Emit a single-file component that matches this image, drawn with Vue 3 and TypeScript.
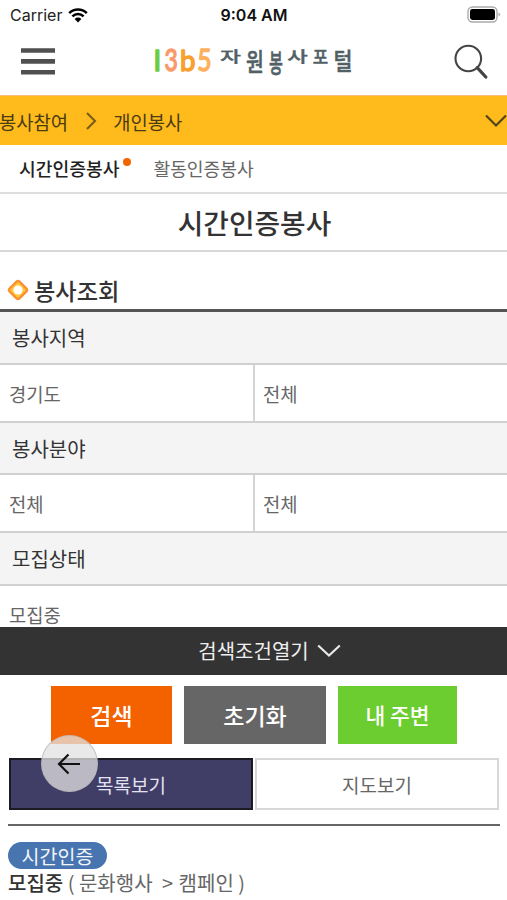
<script setup lang="ts">
interface FilterGroup {
  label: string
  values: string[]
}

interface LogoGlyph {
  char: string
  x: number
  y: number
  sx: number
  sy: number
  color: string
}

const filters: FilterGroup[] = [
  { label: '봉사지역', values: ['경기도', '전체'] },
  { label: '봉사분야', values: ['전체', '전체'] },
  { label: '모집상태', values: ['모집중'] },
]

const digits: LogoGlyph[] = [
  { char: 'l', x: 157.3, y: 71, sx: 1, sy: 0.98, color: '#6bcd3f' },
  { char: '3', x: 171, y: 71, sx: 0.76, sy: 1, color: '#f99a6b' },
  { char: 'b', x: 187.8, y: 71, sx: 0.92, sy: 0.98, color: '#f9a02c' },
  { char: '5', x: 204.5, y: 71, sx: 0.82, sy: 1, color: '#fdb05e' },
]

const hangul: LogoGlyph[] = [
  { char: '자', x: 230.5, y: 56.5, sx: 1.08, sy: 0.72, color: '#515f66' },
  { char: '원', x: 255, y: 61.5, sx: 0.92, sy: 1.18, color: '#515f66' },
  { char: '봉', x: 276, y: 63, sx: 0.72, sy: 1.26, color: '#515f66' },
  { char: '사', x: 297.5, y: 56.5, sx: 1.06, sy: 0.7, color: '#515f66' },
  { char: '포', x: 320.5, y: 57, sx: 0.8, sy: 0.88, color: '#515f66' },
  { char: '털', x: 343, y: 61, sx: 0.98, sy: 1.12, color: '#515f66' },
]

const place = (g: LogoGlyph): string => `translate(${g.x} ${g.y}) scale(${g.sx} ${g.sy})`
</script>

<template>
  <div class="screen">
    <div class="status">
      <div class="carrier">
        <span>Carrier</span>
        <svg width="20" height="15" viewBox="0 0 20 15">
          <path d="M1.2 5.2A12.6 12.6 0 0 1 18.8 5.2M4.4 8.4A8 8 0 0 1 15.6 8.4" fill="none" stroke="#000" stroke-width="2.5" />
          <path d="M6.6 10.9A4.9 4.9 0 0 1 13.4 10.9L10 14.4Z" fill="#000" />
        </svg>
      </div>
      <div class="time">9:04 AM</div>
      <div class="battery">
        <svg width="34" height="18" viewBox="0 0 34 18">
          <rect x="1" y="1" width="29" height="15" rx="4.5" fill="#fff" stroke="#aaa" stroke-width="1.4" />
          <rect x="3" y="3" width="25" height="11" rx="2.4" fill="#000" />
          <path d="M31.5 6.5q1.6.5 1.6 2t-1.6 2z" fill="#aaa" />
        </svg>
      </div>
    </div>

    <header class="header">
      <svg class="menu" width="34" height="27" viewBox="0 0 34 27">
        <path d="M0 2.5H34M0 13.4H34M0 24.2H34" stroke="#505050" stroke-width="4.6" />
      </svg>
      <svg class="logo" width="210" height="44" viewBox="150 40 210 44">
        <text
          v-for="g in digits"
          :key="g.char"
          class="digit"
          :transform="place(g)"
          :fill="g.color"
          :stroke="g.color"
        >{{ g.char }}</text>
        <text
          v-for="g in hangul"
          :key="g.char"
          class="syllable"
          y="8.2"
          :transform="place(g)"
          :fill="g.color"
          :stroke="g.color"
        >{{ g.char }}</text>
      </svg>
      <svg class="search" width="34" height="35" viewBox="0 0 34 35">
        <circle cx="14.3" cy="14.5" r="12.8" fill="none" stroke="#444" stroke-width="2.1" />
        <path d="M23.2 23.7L31.8 33" stroke="#444" stroke-width="3.2" stroke-linecap="round" />
      </svg>
    </header>

    <nav class="crumbs">
      <span>봉사참여</span>
      <svg class="crumb-arrow" width="12" height="20" viewBox="0 0 12 20">
        <path d="M2 2L10 10L2 18" fill="none" stroke="#765a1c" stroke-width="2" />
      </svg>
      <span>개인봉사</span>
      <svg class="crumb-down" width="22" height="14" viewBox="0 0 22 14">
        <path d="M1 1.5L11 11.5L21 1.5" fill="none" stroke="#54441a" stroke-width="2.2" />
      </svg>
    </nav>

    <nav class="subtabs">
      <span class="active">시간인증봉사</span>
      <i class="dot"></i>
      <span>활동인증봉사</span>
    </nav>

    <h1 class="title">시간인증봉사</h1>

    <h2 class="section">
      <svg width="22" height="22" viewBox="0 0 22 22">
        <rect x="4" y="4" width="14" height="14" rx="2.4" fill="#ffc93c" stroke="#fb9130" stroke-width="2.4" transform="rotate(45 11 11)" />
        <circle cx="11" cy="11" r="4.6" fill="#fff" />
      </svg>
      <span>봉사조회</span>
    </h2>

    <section class="filters">
      <div v-for="f in filters" :key="f.label" class="filter">
        <div class="filter-label">{{ f.label }}</div>
        <div class="filter-row">
          <div v-for="(v, i) in f.values" :key="i" class="filter-value">{{ v }}</div>
        </div>
      </div>
    </section>

    <div class="expand">
      <span>검색조건열기</span>
      <svg width="24" height="14" viewBox="0 0 24 14">
        <path d="M1.2 1.5L12 11.6L22.8 1.5" fill="none" stroke="#e8e8e8" stroke-width="2.2" />
      </svg>
    </div>

    <div class="actions">
      <button class="btn find">검색</button>
      <button class="btn reset">초기화</button>
      <button class="btn near">내 주변</button>
    </div>

    <div class="views">
      <button class="view on">목록보기</button>
      <button class="view">지도보기</button>
    </div>

    <article class="result">
      <span class="badge">시간인증</span>
      <p class="summary"><b>모집중</b> <span class="category">( 문화행사 <span class="gt">&gt;</span> 캠페인 )</span></p>
    </article>

    <button class="back" aria-label="back">
      <svg width="24" height="22" viewBox="0 0 24 22">
        <path d="M23 11H2M11.5 1.5L2 11L11.5 20.5" fill="none" stroke="#111" stroke-width="2.2" />
      </svg>
    </button>
  </div>
</template>

<style>
body {
  margin: 0;
  background: #fff;
}
</style>

<style scoped>
.screen,
.screen * {
  box-sizing: border-box;
}
.screen {
  position: relative;
  width: 507px;
  height: 900px;
  overflow: hidden;
  background: #fff;
  color: #333;
  font-family: 'Noto Sans CJK KR', sans-serif;
}
button {
  margin: 0;
  padding: 0;
  border: 0;
  font-family: inherit;
}
svg {
  display: block;
  flex: none;
}
.status {
  display: grid;
  grid-template-columns: 1fr auto 1fr;
  align-items: center;
  height: 30px;
  padding: 0 6px 0 10px;
  font-family: Inter, sans-serif;
  font-size: 16px;
  line-height: 30px;
  color: #222;
}
.carrier {
  display: flex;
  align-items: center;
  gap: 6px;
}
.time {
  padding-right: 3px;
  font-weight: 600;
  font-size: 16px;
  color: #111;
}
.battery {
  display: flex;
  justify-content: flex-end;
  padding-bottom: 1px;
}
.header {
  display: flex;
  align-items: center;
  height: 66px;
  padding: 0 19px 0 21px;
  border-bottom: 1px solid #f6bd83;
}
.menu {
  margin-top: -3px;
}
.logo {
  margin: -2px auto 0 95px;
}
.digit {
  font-family: Lato, sans-serif;
  font-size: 30px;
  text-anchor: middle;
  stroke-width: 1.5px;
  stroke-linejoin: round;
}
.syllable {
  font-size: 21px;
  font-weight: 500;
  text-anchor: middle;
  stroke-width: 0.5px;
  stroke-linejoin: round;
}
.search {
  margin-top: -3px;
}
.crumbs {
  display: flex;
  align-items: center;
  height: 49px;
  background: #ffba1b;
  font-size: 18.8px;
  line-height: 49px;
  color: #4a3a16;
}
.crumbs > span {
  margin-left: -1px;
  padding-top: 1px;
}
.crumb-arrow {
  margin: 0 17px;
}
.crumb-down {
  margin-left: auto;
}
.subtabs {
  display: flex;
  height: 49px;
  padding-left: 19px;
  border-bottom: 2px solid #ddd;
  font-size: 18.2px;
  line-height: 46px;
  color: #666;
}
.subtabs .active {
  font-weight: 500;
  color: #222;
}
.dot {
  width: 8px;
  height: 8px;
  margin: 13px 22px 0 4px;
  border-radius: 50%;
  background: #f26500;
}
.title {
  height: 58px;
  margin: 0;
  padding-left: 2px;
  border-bottom: 2px solid #d8d8d8;
  font-size: 27.8px;
  font-weight: 500;
  line-height: 56px;
  text-align: center;
}
.section {
  display: flex;
  align-items: center;
  gap: 5px;
  height: 60px;
  margin: 0;
  padding: 18px 0 0 7px;
  border-bottom: 3px solid #555;
  font-size: 23.2px;
  font-weight: 500;
  line-height: 36px;
}
.filter-label {
  height: 53px;
  padding-left: 12px;
  border-bottom: 2px solid #d0d0d0;
  background: #f4f4f4;
  font-size: 20px;
  line-height: 51px;
}
.filter:nth-child(2) .filter-label {
  height: 52px;
}
.filter-row {
  display: grid;
  grid-template-columns: 253px 254px;
  height: 58px;
  border-bottom: 2px solid #d0d0d0;
  font-size: 18.8px;
  line-height: 57px;
  color: #666;
}
.filter:last-child .filter-row {
  height: 41px;
  border-bottom: 0;
  overflow: hidden;
}
.filter-value {
  padding-left: 9px;
}
.filter-value + .filter-value {
  padding-left: 8px;
  border-left: 2px solid #d4d4d4;
}
.expand {
  display: flex;
  align-items: center;
  justify-content: center;
  gap: 8px;
  height: 48px;
  padding-left: 32px;
  background: #333;
  color: #eee;
  font-size: 20px;
  line-height: 48px;
}
.actions {
  display: flex;
  gap: 12px;
  padding: 11px 0 0 51px;
}
.btn {
  height: 58px;
  color: #fff;
  font-size: 23px;
  font-weight: 500;
  line-height: 58px;
}
.find {
  width: 121px;
  background: #f46200;
}
.reset {
  width: 142px;
  background: #666;
}
.near {
  width: 119px;
  background: #6bcd2f;
  font-size: 21.5px;
}
.views {
  display: grid;
  grid-template-columns: 244px 244px;
  gap: 2px;
  padding: 14px 0 0 9px;
}
.view {
  height: 52px;
  border: 2px solid #d8d8d8;
  background: #fff;
  color: #666;
  font-size: 19px;
  line-height: 49px;
}
.view.on {
  border-color: #1c1a22;
  background: #403d66;
  color: #e4e2f2;
}
.result {
  margin: 14px 7px 0 8px;
  padding-top: 16px;
  border-top: 2px solid #666;
}
.badge {
  display: block;
  width: 99px;
  height: 27px;
  border-radius: 14px;
  background: #4874b0;
  color: #f2f6fb;
  font-size: 19.5px;
  line-height: 27px;
  text-align: center;
}
.summary {
  margin: 0;
  font-size: 20px;
  line-height: 28px;
  white-space: nowrap;
}
.summary b {
  font-weight: 500;
}
.category {
  color: #666;
}
.gt {
  margin: 0 1px 0 5px;
}
.back {
  position: absolute;
  left: 41px;
  top: 735px;
  display: flex;
  align-items: center;
  justify-content: center;
  width: 57px;
  height: 57px;
  border: 1px solid rgba(180, 180, 180, 0.7);
  border-radius: 50%;
  background: rgba(226, 226, 226, 0.76);
}
.back svg {
  margin-right: 1px;
}
</style>
